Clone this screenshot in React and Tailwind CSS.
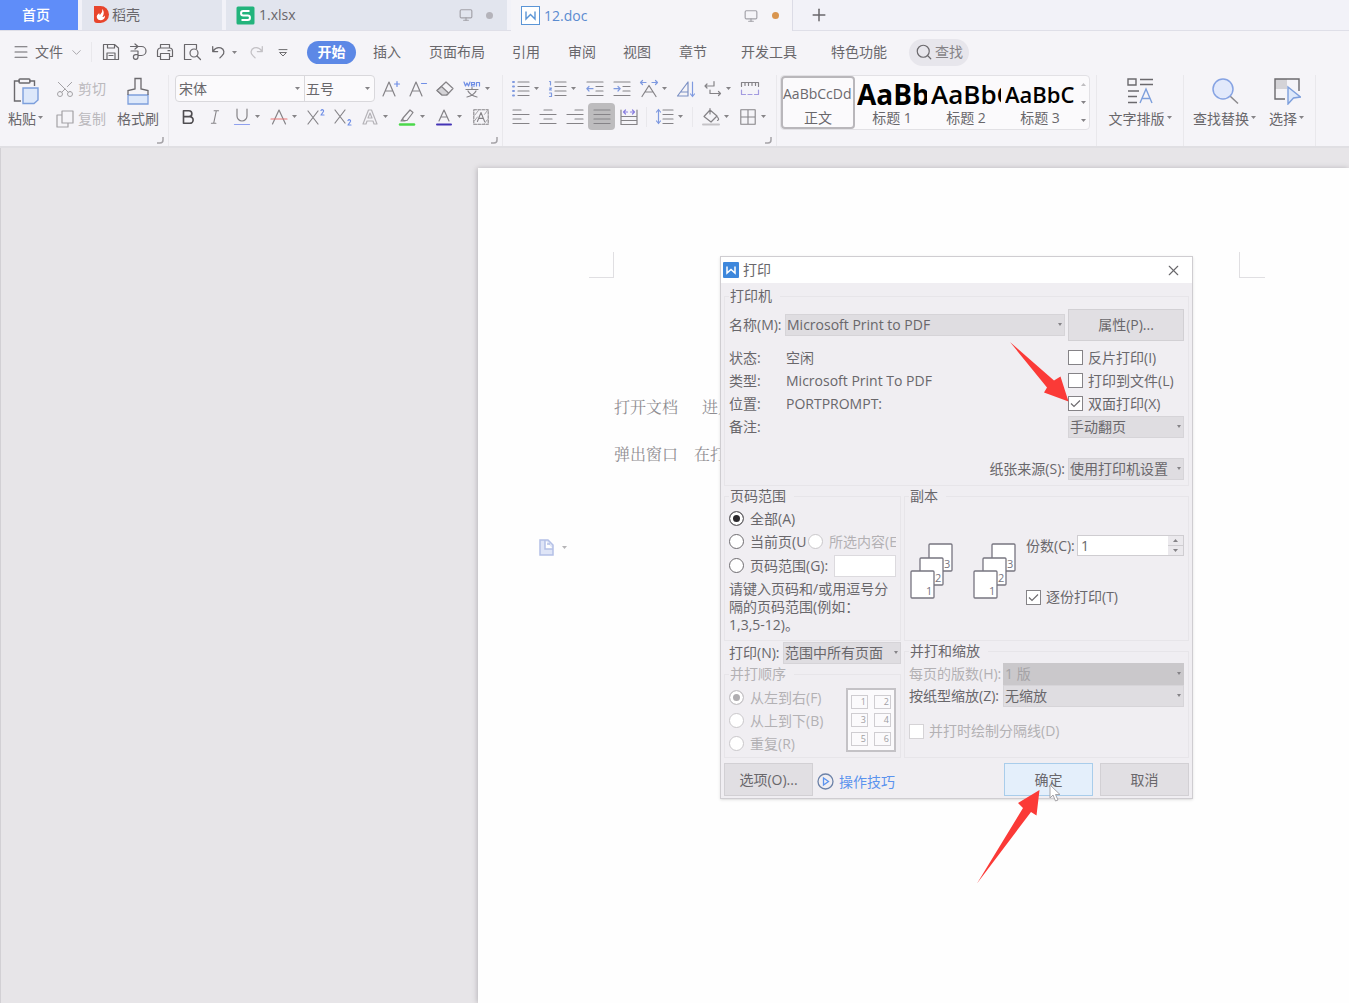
import React, { useState } from 'react';
import clsx from 'clsx';
import { Menu, ChevronDown, Plus, Monitor, Search, Scissors, X } from 'lucide-react';

const MENUS = [
  { label: '插入', className: 'ml-[17px]' },
  { label: '页面布局', className: 'ml-7' },
  { label: '引用', className: 'ml-[27px]' },
  { label: '审阅', className: 'ml-7' },
  { label: '视图', className: 'ml-[27px]' },
  { label: '章节', className: 'ml-7' },
  { label: '开发工具', className: 'ml-[34px]' },
  { label: '特色功能', className: 'ml-[34px]' },
];

const STYLES = [
  { label: '正文', sample: 'AaBbCcDd', className: 'text-[14px] text-[#6b696d]' },
  { label: '标题 1', sample: 'AaBb', className: 'text-[28px] font-bold text-black' },
  { label: '标题 2', sample: 'AaBbC', className: 'text-[26px] font-semibold text-black' },
  { label: '标题 3', sample: 'AaBbCc', className: 'text-[22px] font-semibold text-black' },
];

/* ---------- small pieces ---------- */

function Svg({ children, size = 20, className }) {
  return (
    <svg
      width={size}
      height={size}
      viewBox="0 0 20 20"
      fill="none"
      stroke="currentColor"
      strokeWidth="1.2"
      strokeLinecap="round"
      strokeLinejoin="round"
      className={clsx('shrink-0', className)}
    >
      {children}
    </svg>
  );
}

function Caret({ className }) {
  return (
    <svg width="5" height="3" viewBox="0 0 5 3" className={clsx('shrink-0 fill-[#858387]', className)}>
      <path d="M0 0h5L2.5 3z" />
    </svg>
  );
}

function Tool({ label, caret, active, children }) {
  return (
    <button type="button" aria-label={label} className="flex items-center text-[#858387]">
      <span className={clsx('flex h-[27px] w-[27px] items-center justify-center rounded', active && 'bg-[#bdbcbe]')}>
        {children}
      </span>
      {caret && <span className="flex w-[10px]"><Caret /></span>}
    </button>
  );
}

function Divider({ className }) {
  return <div className={clsx('w-px bg-[#e9e8ec]', className)} />;
}

function Launcher() {
  return (
    <svg width="7" height="7" viewBox="0 0 7 7" className="absolute right-1 bottom-[2px] fill-none stroke-[#a5a3a7]">
      <path d="M6 0v3a3 3 0 0 1-3 3H0" strokeWidth="1.5" />
    </svg>
  );
}

function BigTool({ label, caret, children }) {
  return (
    <button type="button" className="flex flex-col items-center">
      <span className="flex h-8 items-center">{children}</span>
      <span className="flex h-6 items-center gap-[2px] whitespace-nowrap">
        {label}
        {caret && <Caret className="-mt-1" />}
      </span>
    </button>
  );
}

function Select({ id, options, disabled, className, ...rest }) {
  return (
    <div className={clsx('relative h-[22px]', className)}>
      <select
        id={id}
        disabled={disabled}
        className={clsx(
          'block h-full w-full appearance-none border px-px leading-5 outline-none',
          disabled ? 'border-[#cac8cb] bg-[#cac8cb] text-[#a5a3a6] opacity-100' : 'border-[#d6d4d8] bg-[#dfdde1]',
        )}
        {...rest}
      >
        {options.map((o) => <option key={o}>{o}</option>)}
      </select>
      <svg width="4" height="3" viewBox="0 0 4 3" className="pointer-events-none absolute top-[9px] right-[3px] fill-[#858387]">
        <path d="M0 0h4L2 3z" />
      </svg>
    </div>
  );
}

function Check({ label, disabled, defaultChecked, className }) {
  return (
    <label className={clsx('flex items-center gap-[5px] whitespace-nowrap', disabled && 'text-[#b3b1b4]', className)}>
      <span className="relative h-[15px] w-[15px] shrink-0">
        <input
          type="checkbox"
          disabled={disabled}
          defaultChecked={defaultChecked}
          className="peer block h-full w-full appearance-none border border-[#858387] bg-white disabled:border-[#d5d3d6]"
        />
        <svg viewBox="0 0 15 15" className="pointer-events-none absolute inset-0 hidden fill-none stroke-[#6e6c70] peer-checked:block">
          <path d="M3 7.5l3 3L12 4.500" strokeWidth="1.2" />
        </svg>
      </span>
      {label}
    </label>
  );
}

function Radio({ label, name, disabled, defaultChecked, className }) {
  return (
    <label className={clsx('flex items-center gap-[6px] whitespace-nowrap', disabled && 'text-[#b3b1b4]', className)}>
      <input
        type="radio"
        name={name}
        disabled={disabled}
        defaultChecked={defaultChecked}
        className="h-[15px] w-[15px] shrink-0 appearance-none rounded-full border border-[#6e6c70] bg-white checked:bg-[#2b292c] checked:shadow-[inset_0_0_0_3px_#fff] disabled:border-[#c9c7ca] disabled:checked:bg-[#b0aeb1]"
      />
      {label}
    </label>
  );
}

function Group({ title, muted, className, children }) {
  return (
    <fieldset className={clsx('min-w-0 border border-[#e7e5e9] px-1', className)}>
      <legend className={clsx('h-5 px-px pr-2 leading-5', muted && 'text-[#b3b1b4]')}>{title}</legend>
      {children}
    </fieldset>
  );
}

/* ---------- header ---------- */

function TabBar() {
  return (
    <nav className="flex h-[31px] border-b border-[#dfdfe8] bg-[#f2f2f8]">
      <a href="#home" className="flex w-[78px] items-center justify-center bg-[#5f8df9] pr-[6px] font-medium text-white">首页</a>
      <a href="#docer" className="ml-1 flex w-[140px] items-center gap-[3px] bg-[#e2e5ee] pl-[11px]">
        <svg width="16" height="18" viewBox="0 0 16 18">
          <path d="M1 0h6.500a8.500 8.500 0 0 1 0 17H4a3 3 0 0 1-3-3z" fill="#e8452c" />
          <path d="M9 3c1 3-1 4-2 6-.7-.6-.8-1.300-.7-2-2 1.500-3 3-2.300 5 .6 1.600 2.200 2.300 4 2.200 2.600-.2 4.300-2.200 4-4.700-1 1.200-1.700 1.500-2.600 1.600C11 8.500 11.500 5 9 3z" fill="#fff" />
        </svg>
        稻壳
      </a>
      <a href="#xlsx" className="ml-1 flex w-[281px] items-center bg-[#e2e5ee] pl-[10px]">
        <svg width="19" height="19" viewBox="0 0 19 19" className="mr-1">
          <rect x=".5" y=".5" width="18" height="18" rx="1.500" fill="#22b47c" />
          <path d="M13.500 5H7.300a2.200 2.200 0 0 0 0 4.500h4.400a2.200 2.200 0 0 1 0 4.500H5.500" fill="none" stroke="#fff" strokeWidth="2" />
        </svg>
        1.xlsx
        <Monitor className="ml-auto h-[14px] w-[14px] text-[#a2a1a8]" strokeWidth={2} />
        <span className="mr-[14px] ml-[13px] h-[7px] w-[7px] rounded-full bg-[#b4b3ba]" />
      </a>
      <a href="#doc" className="-mb-px ml-1 flex w-[282px] items-center border-r border-[#dcdce6] bg-[#f5f4f8] pl-[10px] text-[#5b8bd0]">
        <svg width="19" height="19" viewBox="0 0 19 19" className="mr-1" fill="none" stroke="#5b95d6">
          <rect x=".5" y=".5" width="18" height="18" fill="#fff" />
          <path d="M5 5.500V13l4.500-4.500L14 13V5.500" strokeWidth="1.400" />
        </svg>
        12.doc
        <Monitor className="ml-auto h-[14px] w-[14px] text-[#a2a1a8]" strokeWidth={2} />
        <span className="mr-[13px] ml-[14px] h-[7px] w-[7px] rounded-full bg-[#d9954f]" />
      </a>
      <button type="button" aria-label="新建" className="ml-4"><Plus className="h-5 w-5" strokeWidth={1.8} /></button>
    </nav>
  );
}

function MenuBar() {
  return (
    <div className="flex h-[42px] items-center pl-3">
      <button type="button" className="flex items-center">
        <Menu className="mr-[5px] h-[18px] w-[18px]" strokeWidth={1.4} />
        文件
        <ChevronDown className="ml-[6px] h-[15px] w-[15px] text-[#a09ea2]" strokeWidth={1.4} />
      </button>
      <Divider className="mr-[5px] ml-[7px] h-5" />
      <Tool label="保存">
        <Svg className="text-[#69676b]">
          <path d="M2.500 2.500h11l4 3.500v11.500h-15zM6 17v-6h8v6M6.500 2.500V6h7V2.500M8 13.500h4" />
        </Svg>
      </Tool>
      <Tool label="输出为PDF">
        <Svg className="text-[#69676b]">
          <path d="M2.500 4.500h7.500M7 2l3 2.500L7 7M10 4.500h3.500a4.500 4.500 0 0 1 0 9H10M3 9h7v6a2.300 2.300 0 1 1-2.300-2.300H10" />
        </Svg>
      </Tool>
      <Tool label="打印">
        <Svg className="text-[#69676b]">
          <path d="M5.500 6V2.500h9V6M5 14.500H2.500V9A3 3 0 0 1 5.500 6h9a3 3 0 0 1 3 3v5.500H15M5.500 11.500h9v6h-9zM13 8.700h2" />
        </Svg>
      </Tool>
      <Tool label="打印预览">
        <Svg className="text-[#69676b]">
          <path d="M9 17.500H2.500v-15h12v4" />
          <circle cx="12" cy="11" r="4" />
          <path d="M15 14l3.500 3.500" />
        </Svg>
      </Tool>
      <Tool label="撤销" caret>
        <Svg size={18} className="text-[#69676b]">
          <path d="M3 4v5.500h5.500M3.500 9c2-3 5-4.500 8.500-3.500 4 1.500 4.500 6 1.500 8.500L11 16.500" strokeWidth="1.400" />
        </Svg>
      </Tool>
      <Tool label="恢复">
        <Svg size={18} className="text-[#c3c1c5]">
          <path d="M17 4v5.500h-5.500M16.500 9c-2-3-5-4.500-8.500-3.500-4 1.500-4.500 6-1.500 8.500L9 16.500" strokeWidth="1.400" />
        </Svg>
      </Tool>
      <Tool label="自定义快速访问工具栏">
        <Svg size={16} className="text-[#69676b]">
          <path d="M5 7h10M6 11l4 4 4-4z" />
        </Svg>
      </Tool>
      <button type="button" className="ml-[11px] h-[23px] w-[49px] rounded-full bg-[#5c88e6] font-bold text-white">开始</button>
      {MENUS.map((m) => (
        <button key={m.label} type="button" className={clsx('whitespace-nowrap', m.className)}>{m.label}</button>
      ))}
      <button type="button" className="ml-[22px] flex h-[27px] w-[60px] items-center justify-center gap-[2px] rounded-full bg-[#e7e6ec] text-[#858387]">
        <Search className="h-[18px] w-[18px] text-[#6b696d]" strokeWidth={1.6} />
        查找
      </button>
    </div>
  );
}

const lines = (rows) => rows.map(([x1, x2], i) => <path key={i} d={`M${x1} ${3 + i * 4.5}H${x2}`} />);

function FontGroup() {
  return (
    <div className="relative flex w-[333px] flex-col pl-[6px]">
      <div className="flex h-[27px] items-center">
        <div className="mr-[2px] flex h-[27px] w-[200px] rounded border border-[#d9d8dc] bg-[#fbfafc]">
          <div className="relative w-[129px] border-r border-[#d9d8dc]">
            <select aria-label="字体" className="h-full w-full appearance-none rounded-l bg-transparent pl-[3px] outline-none">
              <option>宋体</option>
            </select>
            <Caret className="pointer-events-none absolute top-[11px] right-1" />
          </div>
          <div className="relative flex-1">
            <select aria-label="字号" className="h-full w-full appearance-none bg-transparent pl-px outline-none">
              <option>五号</option>
            </select>
            <Caret className="pointer-events-none absolute top-[11px] right-1" />
          </div>
        </div>
        <Tool label="增大字号">
          <Svg><path d="M2 17L8 3l6 14M4.200 12h7.600" /><path d="M16 2.500v5M13.500 5h5" stroke="#6f8ee6" /></Svg>
        </Tool>
        <Tool label="减小字号">
          <Svg><path d="M2 17L8 3l6 14M4.200 12h7.600" /><path d="M13.500 4.500h5" stroke="#6f8ee6" /></Svg>
        </Tool>
        <Tool label="清除格式">
          <Svg><path d="M11 3l7 6.500-6 6.500H7L2 11.500z" /><path d="M6.500 7.500l7 6.500-2 2H7L2 11.500z" fill="#d4d3d7" /></Svg>
        </Tool>
        <Tool label="拼音指南" caret>
          <Svg>
            <path d="M2 3l1.500 4L5 4l1.500 3L8 3M9.500 5.500h3V3.500h-3v3.500h3M14.500 7V3.500h3V7" stroke="#6f8ee6" />
            <path d="M10 8.500V10M4 10.500h12M6 12c1.500 3 5 5 9 6M14 12c-1.500 3-5 5-9 6" />
          </Svg>
        </Tool>
      </div>
      <div className="-ml-px flex h-[29px] items-center">
        <Tool label="加粗"><Svg size={18}><path d="M5 3h6a3.300 3.300 0 0 1 0 6.600H5zM5 9.600h7a3.600 3.600 0 0 1 0 7.400H5z" stroke="#4f4d51" strokeWidth="1.800" /></Svg></Tool>
        <Tool label="倾斜"><Svg size={18}><path d="M9 3h5M6 17h5M11.500 3l-3 14" /></Svg></Tool>
        <Tool label="下划线" caret><Svg><path d="M5 2v7a5 5 0 0 0 10 0V2" /><path d="M2.500 17.500h15" stroke="#8fa0ee" /></Svg></Tool>
        <Tool label="删除线" caret><Svg><path d="M3.500 17l6.500-14 6.500 14" /><path d="M2 12h16" stroke="#ea7474" /></Svg></Tool>
        <Tool label="上标"><Svg><path d="M2 4l10 13M12 4L2 17" /><path d="M15 3.500c1-1.500 3-.5 2.500 1L15 8h3" stroke="#6f8ee6" /></Svg></Tool>
        <Tool label="下标"><Svg><path d="M2 3l10 13M12 3L2 16" /><path d="M15 13.500c1-1.500 3-.5 2.500 1L15 18h3" stroke="#6f8ee6" /></Svg></Tool>
        <Tool label="文字效果" caret><Svg className="text-[#b5b3b8]"><path d="M3 17L8.500 3h3L17 17h-3l-1-3H7l-1 3zM8 11h4l-2-5z" /></Svg></Tool>
        <Tool label="突出显示" caret>
          <Svg><path d="M6 11l7-8 3 2.500-6 8H6zM6 11l-2 3h4" /><path d="M3 17.500h14" stroke="#4bd84b" strokeWidth="2.500" /></Svg>
        </Tool>
        <Tool label="字体颜色" caret>
          <Svg><path d="M5 14l5-11 5 11M6.800 10h6.400" /><path d="M3 17.500h14" stroke="#4433b5" strokeWidth="2" /></Svg>
        </Tool>
        <Tool label="字符底纹">
          <Svg size={18}><rect x="2" y="2" width="16" height="16" strokeDasharray="3 1.500" /><path d="M6 15l4-10 4 10M7.500 11.500h5" /><path d="M3 8l4-5M3 14l3-4M14 17l3-4M14 7l3-4" strokeWidth=".8" /></Svg>
        </Tool>
      </div>
      <Launcher />
    </div>
  );
}

function ParagraphGroup() {
  const blue = '#7f9ae0';
  return (
    <div className="relative flex w-[273px] flex-col pl-[4px]">
      <div className="flex h-[27px] items-center">
        <Tool label="项目符号" caret>
          <Svg>{lines([[7, 18], [7, 18], [7, 18], [7, 18]])}<path d="M2 3h1M2 7.500h1M2 12h1M2 16.500h1" stroke={blue} strokeWidth="2" /></Svg>
        </Tool>
        <Tool label="编号" caret>
          <Svg>{lines([[7, 18], [7, 18], [7, 18], [7, 18]])}<path d="M1.500 2.500h1V6M1.500 9h2L1.500 11h2M1.500 14h2v3.500h-2" stroke={blue} /></Svg>
        </Tool>
        <Tool label="减少缩进">
          <Svg>{lines([[2, 18], [11, 18], [11, 18], [2, 18]])}<path d="M8 9.700H2M4 7.500L1.800 9.700 4 12" stroke={blue} /></Svg>
        </Tool>
        <Tool label="增加缩进">
          <Svg>{lines([[2, 18], [11, 18], [11, 18], [2, 18]])}<path d="M2 9.700h6M6 7.500l2.200 2.200L6 12" stroke={blue} /></Svg>
        </Tool>
        <Tool label="中文版式" caret>
          <Svg><path d="M3 17.500l7-11 7 11M6 13h8" /><path d="M7 3.500H1.500M3.500 1.500l-2 2 2 2M13 3.500h5.500M16.500 1.500l2 2-2 2" stroke={blue} /></Svg>
        </Tool>
        <Tool label="排序">
          <Svg><path d="M1.500 17L12 3v14zM5 13h7" stroke="#7c90c4" /><path d="M16.500 3v14M14.500 15l2 2.500 2-2.500" stroke={blue} /></Svg>
        </Tool>
        <Tool label="换行" caret>
          <Svg><path d="M11 2.500V7H2M4 5L2 7l2 2M7 11v3.500h10.500M15.500 12.500l2 2-2 2" /></Svg>
        </Tool>
        <Tool label="标尺">
          <Svg><path d="M1.500 7.500v-4h17v4M5 4v2.500M8.500 4v2.500M12 4v2.500M15.500 4v2.500" /><path d="M1.500 11v4.500h4M8 15.500h4M14.500 15.500h4V11" stroke="#a39be0" /></Svg>
        </Tool>
      </div>
      <div className="flex h-[29px] items-center">
        <Tool label="左对齐"><Svg>{lines([[2, 10], [2, 18], [2, 10], [2, 18]])}</Svg></Tool>
        <Tool label="居中"><Svg>{lines([[6, 14], [2, 18], [6, 14], [2, 18]])}</Svg></Tool>
        <Tool label="右对齐"><Svg>{lines([[10, 18], [2, 18], [10, 18], [2, 18]])}</Svg></Tool>
        <Tool label="两端对齐" active><Svg>{lines([[2, 18], [2, 18], [2, 18], [2, 18]])}</Svg></Tool>
        <Tool label="分散对齐">
          <Svg><path d="M2 3v14.500h16V3M2 9.500h16M2 13.500h16" /><path d="M4.500 5h4M11.500 5h4M6.500 3l-2 2 2 2M13.500 3l2 2-2 2" stroke="#8a7fe0" /></Svg>
        </Tool>
        <Divider className="mx-1 h-5" />
        <Tool label="行距" caret>
          <Svg>{lines([[8, 18], [8, 18], [8, 18], [8, 18]])}<path d="M3.500 2.500v14M1.500 5l2-2.500 2 2.500M1.500 14l2 2.500 2-2.500" stroke={blue} /></Svg>
        </Tool>
        <Divider className="mx-1 h-5" />
        <Tool label="底纹颜色" caret>
          <Svg><path d="M9 3l7 6-6 6-7-5.500zM9 1.500V7M16.500 10c1.500 2 1.500 3 0 3.500" /><path d="M2 17.500h16" stroke="#c5c3c7" strokeWidth="2" /></Svg>
        </Tool>
        <Tool label="边框" caret><Svg size={18}><path d="M2 2h16v16H2zM10 2v16M2 10h16" /></Svg></Tool>
      </div>
      <Launcher />
    </div>
  );
}

function StyleGallery() {
  const [current, setCurrent] = useState('正文');
  return (
    <div className="ml-[3px] flex h-[55px] w-[310px] rounded border border-[#e2e1e5] bg-[#fbfafc]">
      {STYLES.map((s) => (
        <button
          key={s.label}
          type="button"
          onClick={() => setCurrent(s.label)}
          className={clsx(
            'flex w-[74px] shrink-0 flex-col items-center overflow-hidden border-2',
            s.label === current ? 'rounded-sm border-[#b9b7bb]' : 'border-transparent',
          )}
        >
          <span className={clsx('flex h-[32px] w-full items-center overflow-hidden leading-none whitespace-nowrap', s.className)}>{s.sample}</span>
          <span className="leading-[18px]">{s.label}</span>
        </button>
      ))}
      <div className="flex flex-1 flex-col items-center justify-around">
        <button type="button" aria-label="上一行"><Caret className="rotate-180 opacity-50" /></button>
        <button type="button" aria-label="下一行"><Caret /></button>
        <button type="button" aria-label="更多样式"><Caret /></button>
      </div>
    </div>
  );
}

function Ribbon() {
  return (
    <div className="flex h-[75px] border-b-2 border-[#e0dfe3] pt-[2px]">
      <div className="relative flex w-[168px] items-start pl-2">
        <BigTool label="粘贴" caret>
          <svg width="28" height="28" viewBox="0 0 28 28" fill="none" stroke="#6b696d" strokeWidth="1.400">
            <path d="M8 4H2.500v20H9M17 4h5.500v5" />
            <rect x="7" y="2" width="11" height="4" rx="1" />
            <path d="M11 11h15v12l-4 3.500H11z" fill="#dde8fa" stroke="#7d9fdc" />
          </svg>
        </BigTool>
        <div className="ml-3 flex flex-col text-[#bbb9bd]">
          <button type="button" className="flex h-[28px] items-center gap-[3px]">
            <Scissors className="h-5 w-5 -rotate-90 text-[#a3a1a5]" strokeWidth={1.2} />剪切
          </button>
          <button type="button" className="flex h-[32px] items-center gap-[3px]">
            <Svg className="text-[#a3a1a5]"><path d="M7 2h11v12H7zM7 6H2v12h11v-4" /></Svg>复制
          </button>
        </div>
        <div className="ml-[11px]">
          <BigTool label="格式刷">
            <svg width="26" height="28" viewBox="0 0 26 28" fill="none" stroke="#6b696d" strokeWidth="1.300">
              <path d="M3 18h20v9H3z" fill="#dde8fa" stroke="#7d9fdc" />
              <path d="M3 18v-4.500l7-1.500V1.500h6V12l7 1.500V18" />
            </svg>
          </BigTool>
        </div>
        <Launcher />
      </div>
      <Divider />
      <FontGroup />
      <Divider />
      <ParagraphGroup />
      <Divider />
      <StyleGallery />
      <Divider className="ml-[6px]" />
      <div className="flex w-[86px] justify-center">
        <BigTool label="文字排版" caret>
          <svg width="28" height="28" viewBox="0 0 28 28" fill="none" stroke="#6b696d" strokeWidth="1.400">
            <path d="M2 2h8v6H2zM14 2.500h13M14 7.500h13M2 14h11M2 19.500h9M2 25.500h9" />
            <path d="M14 26l6-14 6 14M16 21.500h8" stroke="#7d9fdc" />
          </svg>
        </BigTool>
      </div>
      <Divider />
      <div className="flex w-[131px] items-start gap-[13px] pl-[9px]">
        <BigTool label="查找替换" caret>
          <svg width="28" height="28" viewBox="0 0 28 28" fill="none">
            <path d="M19 19l8 7.500" stroke="#8a888c" strokeWidth="1.500" />
            <circle cx="12" cy="12" r="10" fill="#e2e9fb" stroke="#86a3e3" strokeWidth="1.500" />
          </svg>
        </BigTool>
        <BigTool label="选择" caret>
          <svg width="28" height="28" viewBox="0 0 28 28" fill="none" stroke="#6b696d" strokeWidth="1.400">
            <path d="M2 2h12v10H2z" fill="#d4d3d7" stroke="none" />
            <path d="M12 22H2V2h24v12" />
            <path d="M15 10l12.500 10-7 1-5.500 6z" fill="#dde8fa" stroke="#7d9fdc" />
          </svg>
        </BigTool>
      </div>
      <Divider />
    </div>
  );
}

/* ---------- print dialog ---------- */

function PageStack() {
  return (
    <svg width="44" height="57" viewBox="0 0 44 57" className="fill-white stroke-[#777580]" strokeWidth="1.300">
      {[[19, 1, 3], [10, 15, 2], [1, 28, 1]].map(([x, y, n]) => (
        <g key={n}>
          <rect x={x} y={y} width="23" height="27" rx="1" />
          <text x={x + 15} y={y + 24} className="fill-[#777580] stroke-none text-[11px]">{n}</text>
        </g>
      ))}
    </svg>
  );
}

function PrinterSection() {
  const info = [
    { label: '状态:', value: '空闲', control: <Check label="反片打印(I)" /> },
    { label: '类型:', value: 'Microsoft Print To PDF', control: <Check label="打印到文件(L)" /> },
    { label: '位置:', value: 'PORTPROMPT:', control: <Check label="双面打印(X)" defaultChecked /> },
    { label: '备注:', value: '', control: <Select options={['手动翻页']} aria-label="双面打印方式" /> },
  ];
  return (
    <Group title="打印机" className="pb-[5px]">
      <div className="flex items-center pt-[3px]">
        <label htmlFor="printer" className="w-[56px] whitespace-nowrap">名称(M):</label>
        <Select id="printer" options={['Microsoft Print to PDF']} className="flex-1" />
        <button type="button" className="ml-[3px] h-8 w-[116px] border border-[#d2d0d4] bg-[#e1dfe3]">属性(P)...</button>
      </div>
      <div className="mt-[5px]">
        {info.map((row) => (
          <div key={row.label} className="flex h-[23px] items-center">
            <span className="w-[57px]">{row.label}</span>
            <span className="flex-1">{row.value}</span>
            <div className="w-[116px]">{row.control}</div>
          </div>
        ))}
      </div>
      <div className="mt-5 flex items-center justify-end gap-[3px]">
        <label htmlFor="source">纸张来源(S):</label>
        <Select id="source" options={['使用打印机设置']} className="w-[116px]" />
      </div>
    </Group>
  );
}

function PrintDialog() {
  return (
    <div role="dialog" aria-label="打印" className="absolute top-[108px] left-[719px] w-[473px] border border-[#cfcdd1] bg-[#f0eef2] shadow">
      <div className="flex h-[26px] items-center bg-white px-[2px]">
        <svg width="16" height="16" viewBox="0 0 16 16" className="mr-1">
          <rect width="16" height="16" rx="1" fill="#3d87dc" />
          <path d="M4 4.500v6.500l4-3.500 4 3.500V4.500" fill="none" stroke="#fff" strokeWidth="1.500" />
        </svg>
        <h2>打印</h2>
        <button type="button" aria-label="关闭" className="mr-2 ml-auto"><X className="h-[17px] w-[17px]" strokeWidth={1.6} /></button>
      </div>

      <div className="px-[3px] pt-[3px] pb-[2px]">
        <PrinterSection />

        <div className="flex gap-[3px]">
          <div className="flex w-[177px] flex-col">
            <Group title="页码范围" className="h-[155px] pt-px">
              <Radio name="range" label="全部(A)" defaultChecked className="h-[23px]" />
              <div className="flex h-[23px] overflow-hidden">
                <Radio name="range" label="当前页(U)" className="w-[77px] shrink-0 overflow-hidden" />
                <Radio name="range" label="所选内容(E)" disabled className="ml-[2px] overflow-hidden" />
              </div>
              <div className="flex h-[25px] items-center justify-between">
                <Radio name="range" label="页码范围(G):" />
                <input aria-label="页码范围" className="h-[22px] w-[62px] border border-[#dcdade] bg-white outline-none" />
              </div>
              <p className="pt-[2px] leading-[18px]">
                请键入页码和/或用逗号分隔的页码范围(例如：
                <br />
                1,3,5-12)。
              </p>
            </Group>
            <div className="flex h-[23px] items-center pl-[5px]">
              <label htmlFor="what" className="w-[54px] whitespace-nowrap">打印(N):</label>
              <Select id="what" options={['范围中所有页面']} className="flex-1" />
            </div>
            <Group title="并打顺序" muted className="pt-[2px]">
              <div className="flex justify-between pb-[2px]">
                <div>
                  <Radio name="order" label="从左到右(F)" disabled defaultChecked className="h-[23px]" />
                  <Radio name="order" label="从上到下(B)" disabled className="h-[23px]" />
                  <Radio name="order" label="重复(R)" disabled className="h-[23px]" />
                </div>
                <div className="mt-[2px] grid h-[64px] w-[50px] grid-cols-2 content-evenly justify-items-center border-2 border-[#c4c2c6] bg-[#fbfafc] text-[9px] text-[#a09ea2]">
                  {[1, 2, 3, 4, 5, 6].map((n) => (
                    <span key={n} className="h-[14px] w-[17px] border border-[#cfcdd1] pr-px text-right leading-3">{n}</span>
                  ))}
                </div>
              </div>
            </Group>
          </div>

          <div className="flex flex-1 flex-col">
            <Group title="副本" className="h-[155px]">
              <div className="flex pt-[29px]">
                <div className="flex gap-[19px] pt-[8px] pl-px">
                  <PageStack />
                  <PageStack />
                </div>
                <div className="ml-[9px] flex-1">
                  <div className="flex items-center">
                    <label htmlFor="copies" className="w-[51px] whitespace-nowrap">份数(C):</label>
                    <div className="flex h-[21px] flex-1 border border-[#cfcdd1] bg-white">
                      <input id="copies" defaultValue="1" className="w-full min-w-0 pl-[3px] outline-none" />
                      <div className="flex w-[15px] shrink-0 flex-col bg-[#ebe9ed]">
                        <button type="button" aria-label="增加" className="flex flex-1 items-center justify-center border-b border-[#cfcdd1]"><Caret className="rotate-180" /></button>
                        <button type="button" aria-label="减少" className="flex flex-1 items-center justify-center"><Caret /></button>
                      </div>
                    </div>
                  </div>
                  <Check label="逐份打印(T)" defaultChecked className="mt-[31px]" />
                </div>
              </div>
            </Group>
            <Group title="并打和缩放" className="flex-1 pt-px">
              <div className="flex h-[23px] items-center">
                <label htmlFor="nup" className="w-[94px] whitespace-nowrap text-[#b3b1b4]">每页的版数(H):</label>
                <Select id="nup" options={['1 版']} disabled className="flex-1" />
              </div>
              <div className="flex h-[22px] items-center">
                <label htmlFor="scale" className="w-[94px] whitespace-nowrap">按纸型缩放(Z):</label>
                <Select id="scale" options={['无缩放']} className="flex-1" />
              </div>
              <Check label="并打时绘制分隔线(D)" disabled className="mt-[14px]" />
            </Group>
          </div>
        </div>

        <div className="mt-[5px] flex h-[33px]">
          <button type="button" className="w-[89px] border border-[#d2d0d4] bg-[#e1dfe3]">选项(O)...</button>
          <a href="#tips" className="ml-1 flex items-center gap-[5px] pt-1 text-[#5b93ee]">
            <svg width="17" height="17" viewBox="0 0 17 17" fill="none">
              <circle cx="8.500" cy="8.500" r="7.500" stroke="#6c82a8" strokeWidth="1.300" />
              <path d="M6.500 5v7l5-3.500z" stroke="#5b93ee" strokeWidth="1.300" />
            </svg>
            操作技巧
          </a>
          <button type="button" className="ml-auto w-[89px] border border-[#a9cdeb] bg-[#e4effb]">确定</button>
          <button type="button" className="ml-[7px] w-[89px] border border-[#d2d0d4] bg-[#e1dfe3]">取消</button>
        </div>
      </div>

      <svg width="59" height="60" viewBox="0 0 59 60" className="pointer-events-none absolute top-[85px] left-[289px]">
        <path d="M0 0L44 38.500 50.500 34.500 58.500 59.500 34 50.500 37 45.500z" fill="#fb3a37" />
      </svg>
      <svg width="12" height="18" viewBox="0 0 12 18" className="pointer-events-none absolute top-[527px] left-[328px]">
        <path d="M1 1v13l3-3 2.500 6 2.500-1-2.500-5.500h4.500z" fill="#fff" stroke="#a5a3a7" />
      </svg>
      <svg width="64" height="94" viewBox="0 0 64 94" className="pointer-events-none absolute top-[533px] left-[256px]">
        <path d="M0 93.500L46 18 41 13 62.500 0 59.500 25.500 54 22z" fill="#fb3a37" />
      </svg>
    </div>
  );
}

/* ---------- document ---------- */

function DocumentArea() {
  return (
    <main className="relative flex flex-1 overflow-hidden border-l border-[#d2d0d4] bg-[#e7e5e8] pt-5 pl-[477px]">
      <article className="flex-1 bg-[#fefefe] shadow-[-1px_0_5px_#b9b7bb]">
        <div className="flex pt-[84px] pl-[111px]">
          <div className="h-[26px] w-[25px] border-r border-b border-[#e0dfe2]" />
          <div className="ml-[625px] h-[26px] w-[26px] border-b border-l border-[#e0dfe2]" />
        </div>
        <div className="pt-[106px] pl-[136px] font-[Liberation_Serif,Noto_Serif_CJK_SC,Noto_Sans_CJK_SC,serif] text-[16px] leading-[47px] text-[#8f8d91]">
          <p className="flex gap-6"><span>打开文档</span><span>进入</span></p>
          <p className="flex gap-4"><span>弹出窗口</span><span>在打印</span></p>
        </div>
        <button type="button" aria-label="段落布局" className="mt-[61px] ml-[60px] flex items-center gap-[7px]">
          <svg width="17" height="17" viewBox="0 0 17 17" fill="#dfe5f7" stroke="#b4c0e6" strokeWidth="1.500">
            <path d="M2 1h8l5 5v10H2zM7 1v9h8M9 5h3" />
          </svg>
          <Caret className="opacity-60" />
        </button>
      </article>
      <PrintDialog />
    </main>
  );
}

export default function App() {
  return (
    <div className="flex min-h-screen flex-col bg-[#f5f4f8] font-[Open_Sans,Noto_Sans_CJK_SC,sans-serif] text-[14px] leading-5 text-[#69676b]">
      <header>
        <TabBar />
        <MenuBar />
        <Ribbon />
      </header>
      <DocumentArea />
    </div>
  );
}
